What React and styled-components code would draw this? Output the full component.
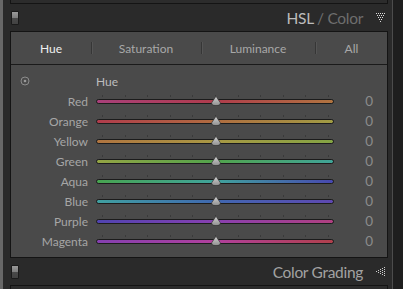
import styled, { createGlobalStyle } from "styled-components"

const GlobalStyle = createGlobalStyle`
  html, body {
    margin: 0;
    padding: 0;
    background: #1f1f1f;
  }
  body {
    font-family: Lato, "Noto Sans", "Liberation Sans", sans-serif;
  }
`

const Frame = styled.div`
  width: 403px;
  height: 289px;
  display: flex;
  overflow: hidden;
  background: #1f1f1f;
`

const LeftEdge = styled.div`
  width: 3px;
  background: #686868;
`

const RightEdge = styled.div`
  flex: 1;
  border-left: 1px solid #4c4c4c;
  background: #1e1e1e;
`

const Column = styled.div`
  width: 389px;
  display: flex;
  flex-direction: column;
  background: #2a2a2a;
`

const PrevPanel = styled.div`
  height: 3px;
  margin: 0 4px 0 7px;
  border: 1px solid #141414;
  border-top: none;
  background: #2c2c2c;
`

const NextPanel = styled.div`
  flex: 1;
  margin: 0 4px 0 7px;
  border: 1px solid #141414;
  border-bottom: none;
  background: #2c2c2c;
`

const SectionHeader = styled.div`
  height: 27px;
  display: flex;
  align-items: center;
  padding: 0 7px 0 8px;
  background: #2a2a2a;
`

const Toggle = styled.div`
  width: 6px;
  height: 12px;
  border: 1px solid #1a1a1a;
  border-radius: 1px;
  background: linear-gradient(
    to bottom,
    #9a9a9a 0%,
    #7c7c7c 50%,
    #4a4a4a 52%,
    #424242 100%
  );
`

const Title = styled.div`
  margin-left: auto;
  font-size: 15.5px;
  letter-spacing: -0.3px;
  color: ${(p) => p.$color || "#a2a2a2"};
`

const Dim = styled.span`
  color: #6e6e6e;
`

const ArrowIcon = styled.svg`
  margin-left: 13px;
  display: block;
`

const Panel = styled.div`
  margin: 0 4px 0 7px;
  border: 1px solid #141414;
  background: #4a4a4a;
`

const TabBar = styled.div`
  height: 32px;
  display: grid;
  grid-template-columns: 80px 110px 114px 73px;
  border-bottom: 1px solid #1a1a1a;
  background: #4a4a4a;
`

const Tab = styled.div`
  position: relative;
  display: flex;
  align-items: center;
  justify-content: center;
  font-size: 12px;
  color: ${(p) => (p.$active ? "#f0f0f0" : "#a8a8a8")};

  &:not(:first-child)::before {
    content: "";
    position: absolute;
    left: 0;
    top: 10px;
    width: 1px;
    height: 12px;
    background: #363636;
    box-shadow: 1px 0 0 #555;
  }
`

const Body = styled.div`
  padding: 6px 0;
`

const Row = styled.div`
  height: 20px;
  display: grid;
  grid-template-columns: 77px 238px 1fr;
  column-gap: 8px;
  align-items: center;
`

const Label = styled.div`
  text-align: right;
  font-size: 12px;
  color: #a6a6a6;
`

const SubTitle = styled.div`
  font-size: 12px;
  color: #bdbdbd;
`

const TargetCell = styled.div`
  padding-left: 9px;
  display: flex;
`

const Value = styled.div`
  text-align: right;
  padding-right: 14px;
  font-size: 13.5px;
  color: #8c8c8c;
`

const Slider = styled.div`
  position: relative;
  height: 20px;
`

const Track = styled.div`
  position: absolute;
  left: 0;
  right: 0;
  top: 8px;
  height: 3px;
  border: 1px solid #1c1c1c;
  border-radius: 3px;
  background: linear-gradient(to right, ${(p) => p.$stops});
`

const Tick = styled.div`
  position: absolute;
  top: 4px;
  width: 1px;
  height: 2px;
  background: #3a3a3a;
`

const Thumb = styled.svg`
  position: absolute;
  left: 115px;
  top: 5px;
  display: block;
`

const hues = [
  { name: "Red", stops: "#a8407a, #b03c4c 50%, #b07440" },
  { name: "Orange", stops: "#b03c4c, #b06c40 50%, #a09c44" },
  { name: "Yellow", stops: "#b07440, #a89844 50%, #84a444" },
  { name: "Green", stops: "#94a444, #52a44c 50%, #40a498" },
  { name: "Aqua", stops: "#48a450, #40a49c 50%, #4848b0" },
  { name: "Blue", stops: "#40a0a0, #4068b0 50%, #5e48b0" },
  { name: "Purple", stops: "#5044b0, #8840b0 50%, #b04080" },
  { name: "Magenta", stops: "#8440b0, #b0409c 50%, #b0404c" },
]

const ticks = Array.from({ length: 11 }, (_, i) => 6 + i * 22.6)

const DownArrow = () => {
  const dots = []
  for (let r = 0; r < 5; r++) {
    for (let i = 0; i < 5 - r; i++) {
      dots.push(<rect key={`${r}-${i}`} x={r + i * 2} y={r * 2} width="1" height="1" fill="#dcdcdc" />)
    }
  }
  return (
    <ArrowIcon width="9" height="9" viewBox="0 0 9 9">
      {dots}
    </ArrowIcon>
  )
}

const LeftArrow = () => {
  const dots = []
  for (let c = 0; c < 5; c++) {
    for (let i = 0; i < 5 - c; i++) {
      dots.push(<rect key={`${c}-${i}`} x={8 - c * 2} y={c + i * 2} width="1" height="1" fill="#cfcfcf" />)
    }
  }
  return (
    <ArrowIcon width="9" height="9" viewBox="0 0 9 9">
      {dots}
    </ArrowIcon>
  )
}

const Target = () => (
  <svg width="10" height="10" viewBox="0 0 10 10">
    <circle cx="5" cy="5" r="4" fill="none" stroke="#8c8c8c" strokeWidth="1" />
    <circle cx="5" cy="5" r="1.3" fill="#9a9a9a" />
  </svg>
)

const SliderThumb = () => (
  <Thumb width="10" height="10" viewBox="0 0 10 10">
    <defs>
      <linearGradient id="thumbFill" x1="0" y1="0" x2="0" y2="1">
        <stop offset="0" stopColor="#d4d4d4" />
        <stop offset="1" stopColor="#8e8e8e" />
      </linearGradient>
    </defs>
    <path
      d="M5 0.3 L9.2 6.6 Q10 9.6 5 9.6 Q0 9.6 0.8 6.6 Z"
      fill="url(#thumbFill)"
      stroke="#2a2a2a"
      strokeWidth="0.6"
    />
  </Thumb>
)

const App = () => {
  return (
    <>
      <GlobalStyle />
      <Frame>
        <LeftEdge />
        <Column>
          <PrevPanel />
          <SectionHeader>
            <Toggle />
            <Title $color="#bcbcbc">
              HSL <Dim>/ Color</Dim>
            </Title>
            <DownArrow />
          </SectionHeader>
          <Panel>
            <TabBar>
              <Tab $active>Hue</Tab>
              <Tab>Saturation</Tab>
              <Tab>Luminance</Tab>
              <Tab>All</Tab>
            </TabBar>
            <Body>
              <Row>
                <TargetCell>
                  <Target />
                </TargetCell>
                <SubTitle>Hue</SubTitle>
              </Row>
              {hues.map((h) => (
                <Row key={h.name}>
                  <Label>{h.name}</Label>
                  <Slider>
                    {ticks.map((x) => (
                      <Tick key={x} style={{ left: `${x}px` }} />
                    ))}
                    <Track $stops={h.stops} />
                    <SliderThumb />
                  </Slider>
                  <Value>0</Value>
                </Row>
              ))}
            </Body>
          </Panel>
          <SectionHeader>
            <Toggle />
            <Title>Color Grading</Title>
            <LeftArrow />
          </SectionHeader>
          <NextPanel />
        </Column>
        <RightEdge />
      </Frame>
    </>
  )
}

export default App
